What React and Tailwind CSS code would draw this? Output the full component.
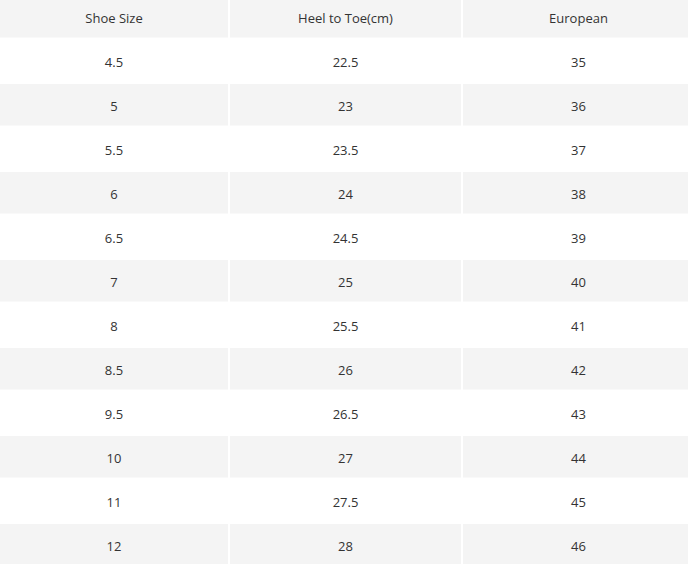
const rows = [
  ['4.5', '22.5', '35'],
  ['5', '23', '36'],
  ['5.5', '23.5', '37'],
  ['6', '24', '38'],
  ['6.5', '24.5', '39'],
  ['7', '25', '40'],
  ['8', '25.5', '41'],
  ['8.5', '26', '42'],
  ['9.5', '26.5', '43'],
  ['10', '27', '44'],
  ['11', '27.5', '45'],
  ['12', '28', '46'],
]

function Row({ cells, gray, header }) {
  return (
    <div className={`grid grid-cols-[228px_231px_1fr] gap-x-[2px] ${header ? 'h-[38px]' : 'h-[42px]'}`}>
      {cells.map((c, i) => (
        <div
          key={i}
          className={`flex items-center justify-center ${header ? '' : 'pt-[4px]'} ${i === 2 ? 'pl-[6px]' : ''} ${gray ? 'bg-[#f4f4f4] border-b border-[#f9f9f9]' : 'bg-white'}`}
        >
          {c}
        </div>
      ))}
    </div>
  )
}

export default function App() {
  return (
    <div
      className="w-[688px] h-[564px] overflow-hidden bg-white text-[13px] text-[#333]"
      style={{ fontFamily: '"Open Sans", "Noto Sans", sans-serif' }}
    >
      <div className="flex flex-col gap-y-[2px]">
        <Row cells={['Shoe Size', 'Heel to Toe(cm)', 'European']} gray header />
        {rows.map((r, i) => (
          <Row key={r[0]} cells={r} gray={i % 2 === 1} />
        ))}
      </div>
    </div>
  )
}
